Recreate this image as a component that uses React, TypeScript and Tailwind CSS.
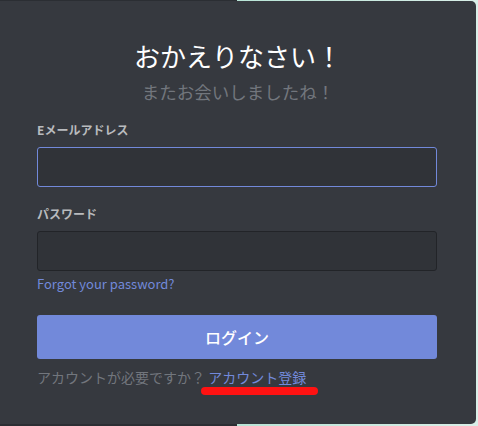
import React from "react";

export default function App() {
  const font = { fontFamily: '"Noto Sans CJK JP", "Noto Sans", sans-serif' };
  return (
    <div
      className="w-[478px] h-[426px] overflow-hidden bg-[linear-gradient(to_right,#2b2e33_0,#2b2e33_237px,#b8e4d6_237px,#d9efe8_100%)] pt-[1px]"
      style={font}
    >
      <div className="w-[476px] h-[423px] bg-[#36393f] rounded-r-[5px] pt-[39px] px-[37px] flex flex-col">
        <div className="text-center text-white text-[26px] leading-[32px]">おかえりなさい！</div>
        <div className="mt-[10px] text-center text-[#72767d] text-[17.5px] leading-[20px]">またお会いしましたね！</div>

        <div className="mt-[20px] text-[12px] leading-[16px] font-bold text-[#b9bbbe]">Eメールアドレス</div>
        <div className="mt-[9px] h-[40px] w-[400px] rounded-[3px] border border-[#7289da] bg-[#303338]" />

        <div className="mt-[19px] text-[12px] leading-[16px] font-bold text-[#b9bbbe]">パスワード</div>
        <div className="mt-[9px] h-[40px] w-[400px] rounded-[3px] border border-[#222428] bg-[#303338]" />

        <div className="mt-[5px] text-[13px] leading-[16px] text-[#7289da]">Forgot your password?</div>

        <div className="mt-[23px] h-[44px] w-[400px] rounded-[3px] bg-[#7289da] flex items-center justify-center text-white text-[16px] font-medium">
          ログイン
        </div>

        <div className="mt-[10px] text-[14px] leading-[16px] text-[#72767d]">
          アカウントが必要ですか？ <span className="text-[#7289da]">アカウント登録</span>
        </div>
        <div className="mt-[2px] ml-[164px] w-[117px] h-[8px] rounded-full bg-[#ff1212]" />
      </div>
    </div>
  );
}
